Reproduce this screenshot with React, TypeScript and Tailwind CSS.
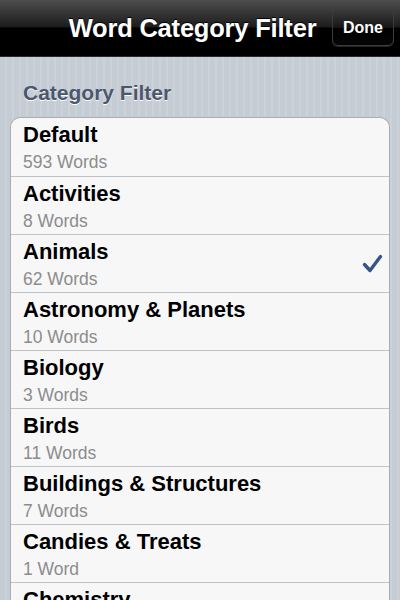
const categories = [
  { name: "Default", count: "593 Words" },
  { name: "Activities", count: "8 Words" },
  { name: "Animals", count: "62 Words", checked: true },
  { name: "Astronomy & Planets", count: "10 Words" },
  { name: "Biology", count: "3 Words" },
  { name: "Birds", count: "11 Words" },
  { name: "Buildings & Structures", count: "7 Words" },
  { name: "Candies & Treats", count: "1 Word" },
  { name: "Chemistry", count: "4 Words" },
];

const App = () => {
  return (
    <div className="w-[400px] h-[600px] overflow-hidden flex flex-col font-['Liberation_Sans',Arial,sans-serif] bg-[repeating-linear-gradient(90deg,#c5ccd4_0px,#c5ccd4_5px,#cbd2d9_5px,#cbd2d9_7px)]">
      {/* nav bar */}
      <div className="relative h-[57px] shrink-0 flex items-center justify-center bg-[linear-gradient(180deg,#4e4e4e_0%,#1c1c1c_48%,#000_50%,#000_100%)] border-b border-[#2a2a2a]">
        <div className="mr-[15px] text-white text-[25.5px] font-bold tracking-[-0.2px] [text-shadow:0_-1px_0_#000]">
          Word Category Filter
        </div>
        <button className="absolute right-[6px] top-[9px] w-[62px] h-[37px] rounded-[6px] border border-[#3c3c3c] bg-[linear-gradient(180deg,#3a3a3a_0%,#161616_50%,#000_52%,#060606_100%)] text-white text-[16px] font-bold shadow-[0_1px_0_rgba(255,255,255,0.15)]">
          Done
        </button>
      </div>

      <div className="px-[10px]">
        <div className="pt-[23px] pb-[12px] pl-[13px] text-[21px] leading-[25px] font-bold text-[#4c566c] [text-shadow:0_1px_0_#fff]">
          Category Filter
        </div>
        <div className="rounded-t-[10px] border border-b-0 border-[#a8adb3] bg-[#f7f7f7] overflow-hidden">
          {categories.map((c, i) => (
            <div
              key={c.name}
              className={`h-[58px] flex items-center pl-[12px] pr-[6px] ${i > 0 ? "border-t border-[#bfc2c5]" : ""}`}
            >
              <div className="flex-1 flex flex-col self-start pt-[4px]">
                <div className="text-[22px] font-bold text-black leading-[26px]">
                  {c.name}
                </div>
                <div className="text-[17.5px] text-[#8c8c8c] leading-[20px] mt-[4px]">
                  {c.count}
                </div>
              </div>
              {c.checked && (
                <svg width="21" height="19" viewBox="0 0 21 19">
                  <path
                    d="M2.5 10.5 L8 16.5 L18.5 2.5"
                    fill="none"
                    stroke="#385487"
                    strokeWidth="3.4"
                    strokeLinecap="round"
                    strokeLinejoin="round"
                  />
                </svg>
              )}
            </div>
          ))}
        </div>
      </div>
    </div>
  );
};

export default App;
